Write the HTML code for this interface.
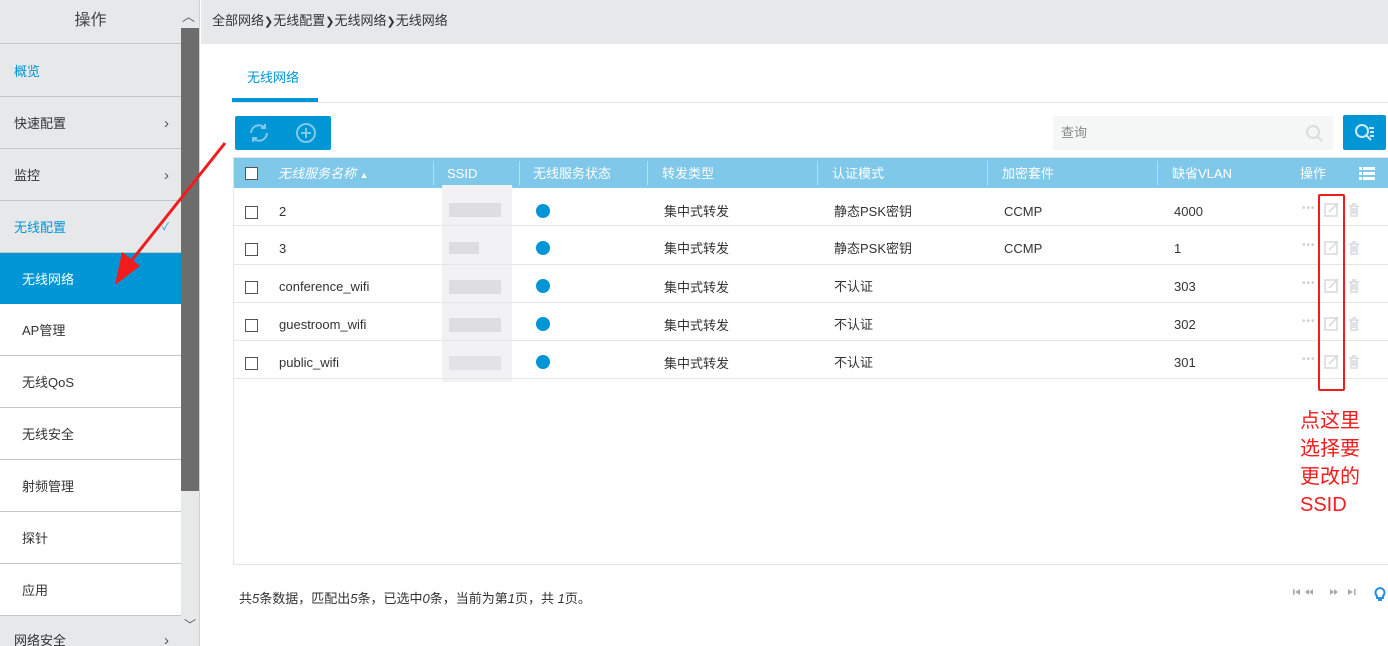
<!DOCTYPE html>
<html><head><meta charset="utf-8"><style>
*{margin:0;padding:0;box-sizing:border-box}
body{width:1388px;height:646px;overflow:hidden;background:#fff;font-family:"Liberation Sans","Noto Sans CJK SC",sans-serif;font-size:13px;color:#333;position:relative}
.a{position:absolute}
.side{left:0;top:0;width:200px;height:646px;background:#e6e8ea;border-right:1px solid #cfd2d4;overflow:hidden}
.item{position:absolute;left:0;width:181px;height:52px;border-bottom:1px solid #c4c6c8;line-height:54px;padding-left:14px;font-size:13px;color:#333}
.sub{background:#fff;padding-left:22px}
.chev{position:absolute;right:12px;top:0;font-size:15px;color:#555}
.cb{position:absolute;width:13px;height:13px;border:1px solid #555;background:#fff}
.row{position:absolute;left:234px;width:1154px;height:38px;border-bottom:1px solid #e3e5e6}
.row span{position:absolute;top:15px;font-size:13px;line-height:14px;color:#333}
.dot{position:absolute;left:302px;top:16px;width:14px;height:14px;border-radius:50%;background:#0096d6}
.hd{position:absolute;top:8px;line-height:16px;color:#fff;font-size:13px}
.sep{position:absolute;top:3px;width:1px;height:24px;background:#b7def0}
.ops{position:absolute;left:1068px;top:13px;color:#ccd;font-size:10px;letter-spacing:1px}
</style></head><body>
<div class="a side">
 <div class="a" style="left:0;top:0;width:181px;height:44px;line-height:42px;text-align:center;font-size:16px;color:#444;border-bottom:1px solid #c4c6c8">操作</div>
 <div class="a" style="left:182px;top:6px;font-size:13px;color:#555">︿</div>
 <div class="item" style="top:45px;color:#0096d6">概览</div>
 <div class="item" style="top:97px">快速配置<span class="chev">›</span></div>
 <div class="item" style="top:149px">监控<span class="chev">›</span></div>
 <div class="item" style="top:201px;color:#0096d6">无线配置<span class="chev" style="color:#0096d6;font-size:10px">✓</span></div>
 <div class="item sub" style="top:253px;background:#0096d6;color:#fff">无线网络</div>
 <div class="item sub" style="top:304px">AP管理</div>
 <div class="item sub" style="top:356px">无线QoS</div>
 <div class="item sub" style="top:408px">无线安全</div>
 <div class="item sub" style="top:460px">射频管理</div>
 <div class="item sub" style="top:512px">探针</div>
 <div class="item sub" style="top:564px">应用</div>
 <div class="item" style="top:616px;line-height:50px">网络安全<span class="chev">›</span></div>
 <div class="a" style="left:181px;top:28px;width:18px;height:463px;background:#6d6d6d"></div>
 <div class="a" style="left:184px;top:616px;font-size:12px;color:#555">﹀</div>
</div>
<div class="a" style="left:201px;top:0;width:1187px;height:44px;background:#e6e8ea;line-height:42px;padding-left:11px;font-size:13px;color:#333">全部网络<span style="font-size:11px">❯</span>无线配置<span style="font-size:11px">❯</span>无线网络<span style="font-size:11px">❯</span>无线网络</div>
<div class="a" style="left:247px;top:67px;color:#0096d6;font-size:13px">无线网络</div>
<div class="a" style="left:232px;top:98px;width:86px;height:4px;background:#0096d6"></div>
<div class="a" style="left:232px;top:102px;width:1156px;height:1px;background:#e3e5e6"></div>
<div class="a" style="left:235px;top:116px;width:96px;height:34px;background:#0096d6;border-radius:2px">
 <svg class="a" style="left:12px;top:6px" width="24" height="22" viewBox="0 0 24 22" fill="none" stroke="#7fc8ea" stroke-width="2"><path d="M4 11a8 8 0 0 1 14-5M20 11a8 8 0 0 1-14 5"/><path d="M18 2v4h-4M6 20v-4h4"/></svg>
 <svg class="a" style="left:60px;top:6px" width="22" height="22" viewBox="0 0 22 22" fill="none" stroke="#7fc8ea" stroke-width="2"><circle cx="11" cy="11" r="9"/><path d="M11 6v10M6 11h10"/></svg>
</div>
<div class="a" style="left:1053px;top:116px;width:280px;height:34px;background:#f5f6f6;line-height:34px;padding-left:8px;color:#888">查询
 <svg class="a" style="left:252px;top:8px" width="20" height="20" viewBox="0 0 20 20" fill="none" stroke="#ddd" stroke-width="2"><circle cx="8" cy="8" r="6"/><path d="M12.5 12.5l5 5"/></svg></div>
<div class="a" style="left:1343px;top:115px;width:43px;height:35px;background:#0096d6;border-radius:2px">
 <svg class="a" style="left:11px;top:8px" width="22" height="20" viewBox="0 0 22 20" fill="none" stroke="#cfeaf7" stroke-width="2"><circle cx="8" cy="8" r="6"/><path d="M12 12l5 5M15 5h5M16 9h4M16 13h4"/></svg></div>
<div class="a" style="left:233px;top:157px;width:1155px;height:408px;border:1px solid #e3e5e6;border-right:none"></div>
<div class="a" style="left:234px;top:158px;width:1154px;height:30px;background:#7fc8ea">
 <div class="cb" style="left:11px;top:9px;border-color:#555"></div>
 <div class="hd" style="left:44px;font-style:italic">无线服务名称 <span style="font-size:9px;font-style:normal">▲</span></div>
 <div class="sep" style="left:199px"></div><div class="hd" style="left:213px">SSID</div>
 <div class="sep" style="left:285px"></div><div class="hd" style="left:299px">无线服务状态</div>
 <div class="sep" style="left:413px"></div><div class="hd" style="left:428px">转发类型</div>
 <div class="sep" style="left:583px"></div><div class="hd" style="left:598px">认证模式</div>
 <div class="sep" style="left:753px"></div><div class="hd" style="left:768px">加密套件</div>
 <div class="sep" style="left:923px"></div><div class="hd" style="left:938px">缺省VLAN</div>
 <div class="hd" style="left:1066px">操作</div>
 <svg class="a" style="left:1125px;top:9px" width="16" height="13" viewBox="0 0 16 13" fill="#fff"><rect x="0" y="0" width="3" height="3"/><rect x="4" y="0" width="12" height="3"/><rect x="0" y="5" width="3" height="3"/><rect x="4" y="5" width="12" height="3"/><rect x="0" y="10" width="3" height="3"/><rect x="4" y="10" width="12" height="3"/></svg>
</div>
<div class="a" style="left:442px;top:185px;width:70px;height:197px;background:#f2f2f4"></div>
<div class="a" style="left:449px;top:203px;width:52px;height:14px;background:#dedde2"></div>
<div class="a" style="left:449px;top:242px;width:30px;height:12px;background:#dedde2"></div>
<div class="a" style="left:449px;top:280px;width:52px;height:14px;background:#dedde2"></div>
<div class="a" style="left:449px;top:318px;width:52px;height:14px;background:#dedde2"></div>
<div class="a" style="left:449px;top:356px;width:52px;height:14px;background:#e3e2e6"></div>

<div class="row" style="top:188px"><div class="cb" style="left:11px;top:18px"></div><span style="left:45px;top:17px">2</span><div class="dot"></div><span style="left:430px;top:17px">集中式转发</span><span style="left:600px;top:17px">静态PSK密钥</span><span style="left:770px;top:17px">CCMP</span><span style="left:940px;top:17px">4000</span><div class="ops" style="top:15px">•••</div></div>
<div class="row" style="top:227px"><div class="cb" style="left:11px;top:16px"></div><span style="left:45px">3</span><div class="dot" style="top:14px"></div><span style="left:430px">集中式转发</span><span style="left:600px">静态PSK密钥</span><span style="left:770px">CCMP</span><span style="left:940px">1</span><div class="ops">•••</div></div>
<div class="row" style="top:265px"><div class="cb" style="left:11px;top:16px"></div><span style="left:45px">conference_wifi</span><div class="dot" style="top:14px"></div><span style="left:430px;top:16px">集中式转发</span><span style="left:600px">不认证</span><span style="left:940px">303</span><div class="ops">•••</div></div>
<div class="row" style="top:303px"><div class="cb" style="left:11px;top:16px"></div><span style="left:45px">guestroom_wifi</span><div class="dot" style="top:14px"></div><span style="left:430px;top:16px">集中式转发</span><span style="left:600px">不认证</span><span style="left:940px">302</span><div class="ops">•••</div></div>
<div class="row" style="top:341px"><div class="cb" style="left:11px;top:16px"></div><span style="left:45px">public_wifi</span><div class="dot" style="top:14px"></div><span style="left:430px;top:16px">集中式转发</span><span style="left:600px">不认证</span><span style="left:940px">301</span><div class="ops">•••</div></div>

<svg class="a" style="left:1320px;top:195px" width="50" height="180" viewBox="0 0 50 180" fill="none" stroke="#d5d9de" stroke-width="1.5">
 <g id="ic"><rect x="5" y="9" width="12" height="12"/><path d="M9 17l9-9"/><path d="M29 11h10M31 11v10h6V11M33 13v6M35 13v6M32 9h4" /></g>
 <use href="#ic" y="38"/><use href="#ic" y="76"/><use href="#ic" y="114"/><use href="#ic" y="152"/>
</svg>
<div class="a" style="left:1318px;top:194px;width:27px;height:197px;border:2px solid #f21c1c;border-radius:2px"></div>
<div class="a" style="left:1300px;top:407px;color:#f21c1c;font-size:20px;line-height:28px">点这里<br>选择要<br>更改的<br>SSID</div>
<svg class="a" style="left:100px;top:140px" width="130" height="150" viewBox="0 0 130 150"><path d="M125 3L28 125" stroke="#f21c1c" stroke-width="3"/><path d="M15 145L22 112L40 126Z" fill="#f21c1c"/></svg>
<div class="a" style="left:239px;top:588px;font-size:13px;color:#333">共<i>5</i>条数据，匹配出<i>5</i>条，已选中<i>0</i>条，当前为第<i>1</i>页，共 <i>1</i>页。</div>
<svg class="a" style="left:1293px;top:588px" width="72" height="10" viewBox="0 0 72 10" fill="#aaa"><rect x="0" y="1" width="1.5" height="6"/><path d="M2 4l5-3v6z"/><path d="M12 4l4-3v6zM16 4l4-3v6z"/><path d="M37 1l4 3-4 3zM41 1l4 3-4 3z"/><path d="M55 1l5 3-5 3z"/><rect x="61" y="1" width="1.5" height="6"/></svg>
<svg class="a" style="left:1374px;top:586px" width="12" height="16" viewBox="0 0 12 16" fill="none" stroke="#2a8fe0" stroke-width="2"><path d="M3 10a4.5 4.5 0 1 1 6 0v2H3z"/><path d="M4 14h4"/></svg>
</body></html>
